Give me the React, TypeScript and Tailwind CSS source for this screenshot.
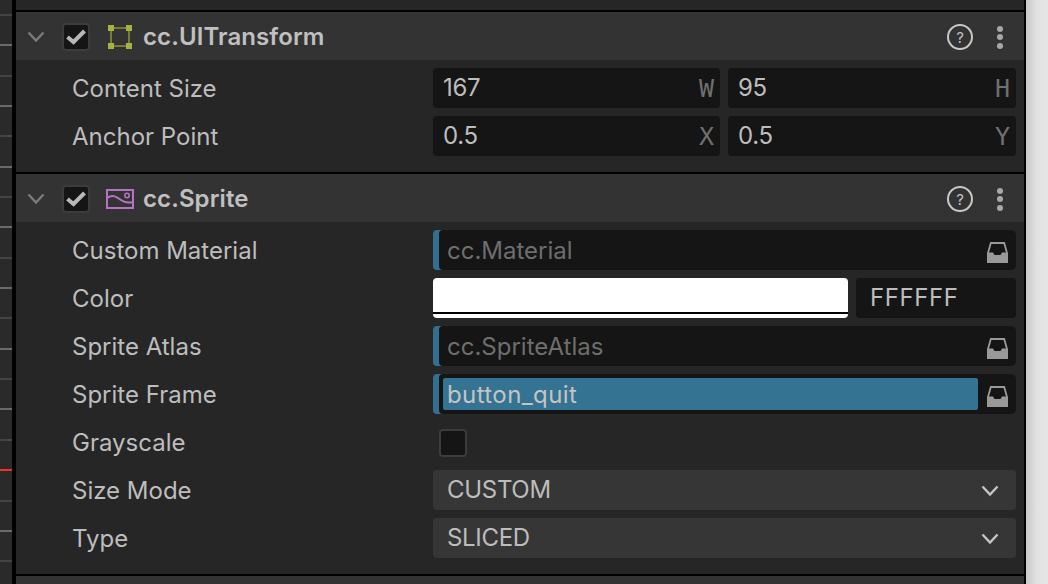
import React from "react"

const DIM = "border-[#444444]"
const BRIGHT = "border-[#6a6a6a]"

const ticks = [
  BRIGHT, DIM, BRIGHT, DIM, BRIGHT, DIM, BRIGHT, DIM, BRIGHT,
  DIM, BRIGHT, DIM, BRIGHT, DIM, "border-[#ee3322]", DIM, BRIGHT, DIM
]

const Chevron = ({ className }: { className: string }) => (
  <svg width="18" height="12" viewBox="0 0 18 12" fill="none" className={`shrink-0 ${className}`}>
    <path d="M1.5 1.5 L9 9.5 L16.5 1.5" stroke="currentColor" strokeWidth="2.4" />
  </svg>
)

const Check = ({ checked = true }: { checked?: boolean }) => (
  <div className="w-[28px] h-[28px] translate-y-[1px] rounded-[4px] bg-[#151515] border-2 border-[#3c3c3c] flex items-center justify-center shrink-0">
    {checked && (
      <svg width="20" height="16" viewBox="0 0 20 16" fill="none">
        <path d="M1.5 8 L7.5 13 L18.5 2" stroke="#b8b8b8" strokeWidth="4" />
      </svg>
    )}
  </div>
)

const TransformIcon = () => (
  <svg width="24" height="24" viewBox="0 0 24 24" className="shrink-0 translate-y-[1px]">
    <rect x="3" y="3" width="18" height="18" fill="none" stroke="#737b35" strokeWidth="2" />
    <rect x="0" y="0" width="6" height="6" fill="#a8b23e" />
    <rect x="18" y="0" width="6" height="6" fill="#a8b23e" />
    <rect x="0" y="18" width="6" height="6" fill="#a8b23e" />
    <rect x="18" y="18" width="6" height="6" fill="#a8b23e" />
  </svg>
)

const SpriteIcon = () => (
  <svg width="28" height="20" viewBox="0 0 28 20" fill="none" className="shrink-0 translate-y-[1px]">
    <rect x="1" y="1" width="26" height="18" stroke="#b573c4" strokeWidth="2" />
    <path d="M1 9 C7 5 11 8 15 11 C19 14 23 14 27 13" stroke="#b573c4" strokeWidth="2" />
    <circle cx="21" cy="6.5" r="2.2" stroke="#b573c4" strokeWidth="1.6" />
  </svg>
)

const TrayIcon = () => (
  <svg width="21" height="21" viewBox="0 0 21 21" className="shrink-0 translate-y-[2px]">
    <path d="M1 11 L3.8 1 H17.2 L20 11" fill="none" stroke="#999999" strokeWidth="1.8" />
    <path d="M0 10.5 H6 L7.5 13 H13.5 L15 10.5 H21 V21 H0 Z" fill="#999999" />
  </svg>
)

const Header = ({ title, icon }: { title: string; icon: React.ReactNode }) => (
  <div className="h-[48px] bg-[#333333] flex items-center pl-[11px] pr-[11px]">
    <Chevron className="text-[#7c7c7c] translate-y-[1px]" />
    <div className="ml-[17px]">
      <Check />
    </div>
    <div className="w-[30px] flex justify-center ml-[15px]">{icon}</div>
    <span className="ml-[8px] text-[24px] tracking-[0.1px] font-semibold text-[#c0c0c0] translate-y-[1px]">{title}</span>
    <div className="ml-auto flex items-center gap-[14px] translate-y-[1px]">
      <div className="w-[26px] h-[26px] rounded-full border-2 border-[#c8c8c8] flex items-center justify-center text-[#c0c0c0] text-[15px] leading-none">
        ?
      </div>
      <div className="w-[26px] flex flex-col items-center gap-[2.5px]">
        <span className="w-[6px] h-[6px] rounded-full bg-[#a8a8a8]" />
        <span className="w-[6px] h-[6px] rounded-full bg-[#a8a8a8]" />
        <span className="w-[6px] h-[6px] rounded-full bg-[#a8a8a8]" />
      </div>
    </div>
  </div>
)

const Row = ({ label, children }: { label: string; children: React.ReactNode }) => (
  <div className="h-[40px] flex items-center">
    <span className="w-[417px] pl-[56px] text-[24px] text-[#bdbdbd] shrink-0 translate-y-[1px]">{label}</span>
    <div className="flex-1 flex items-center gap-[8px] h-full">{children}</div>
  </div>
)

const NumInput = ({ value, unit, first }: { value: string; unit: string; first?: boolean }) => (
  <div className={`${first ? "w-[287px] shrink-0" : "flex-1"} h-full rounded-[4px] bg-[#151515] flex items-center justify-between pl-[10px] pr-[6px]`}>
    <span className="text-[24px] tracking-[-0.3px] text-[#bdbdbd]">{value}</span>
    <span className="text-[25px] text-[#707070] translate-y-[1px] font-['DejaVu_Sans_Mono',monospace]">{unit}</span>
  </div>
)

const AssetInput = ({ value, selected }: { value: string; selected?: boolean }) => (
  <div className="flex-1 h-full rounded-[4px] bg-[#33708f] pl-[6px]">
    <div className="h-full rounded-[4px] bg-[#151515] flex items-center pr-[8px]">
      {selected ? (
        <div className="ml-[4px] w-[535px] h-[32px] bg-[#357392] rounded-[2px] flex items-center">
          <span className="ml-[4px] text-[24px] tracking-[0.4px] text-[#c4c4c4] translate-y-[1px]">{value}</span>
        </div>
      ) : (
        <span className="ml-[8px] text-[24px] text-[#6e6e6e] translate-y-[1px]">{value}</span>
      )}
      <div className="ml-auto">
        <TrayIcon />
      </div>
    </div>
  </div>
)

const Select = ({ value }: { value: string }) => (
  <div className="flex-1 h-full rounded-[4px] bg-[#363636] flex items-center justify-between pl-[14px] pr-[17px]">
    <span className="text-[24px] tracking-[-0.3px] text-[#bdbdbd]">{value}</span>
    <Chevron className="text-[#c4c4c4] translate-y-[1px]" />
  </div>
)

export default function App() {
  return (
    <div className="w-[1048px] h-[584px] overflow-hidden flex bg-[#e4e4e4] font-['Inter',sans-serif]">
      {/* timeline strip */}
      <div className="w-[12px] h-full bg-[#2a2a2a] shrink-0 flex flex-col">
        <div className={`h-[16px] shrink-0 border-b-2 ${DIM}`} />
        {ticks.map((c, i) => (
          <div key={i} className={`h-[30.35px] shrink-0 border-b-2 ${c}`} />
        ))}
      </div>
      <div className="w-[4px] h-full bg-black shrink-0" />

      <div className="w-[1010px] h-full bg-[#262626] border-r-2 border-black shrink-0 flex flex-col">
        <div className="h-[10px] shrink-0" />
        <div className="h-[2px] bg-black shrink-0" />

        <Header title="cc.UITransform" icon={<TransformIcon />} />
        <div className="flex flex-col gap-[8px] pt-[8px] pb-[16px] pr-[8px]">
          <Row label="Content Size">
            <NumInput value="167" unit="W" first />
            <NumInput value="95" unit="H" />
          </Row>
          <Row label="Anchor Point">
            <NumInput value="0.5" unit="X" first />
            <NumInput value="0.5" unit="Y" />
          </Row>
        </div>
        <div className="h-[2px] bg-black shrink-0" />

        <Header title="cc.Sprite" icon={<SpriteIcon />} />
        <div className="flex flex-col gap-[8px] pt-[8px] pb-[16px] pr-[8px]">
          <Row label="Custom Material">
            <AssetInput value="cc.Material" />
          </Row>
          <Row label="Color">
            <div className="w-[415px] h-full rounded-[4px] bg-white flex flex-col justify-end pb-[4px] shrink-0">
              <div className="h-[2px] bg-black" />
            </div>
            <div className="flex-1 h-full rounded-[4px] bg-[#151515] flex items-center pl-[14px]">
              <span className="text-[24px] tracking-[0.6px] text-[#bdbdbd]">FFFFFF</span>
            </div>
          </Row>
          <Row label="Sprite Atlas">
            <AssetInput value="cc.SpriteAtlas" />
          </Row>
          <Row label="Sprite Frame">
            <AssetInput value="button_quit" selected />
          </Row>
          <Row label="Grayscale">
            <div className="ml-[6px]">
              <Check checked={false} />
            </div>
          </Row>
          <Row label="Size Mode">
            <Select value="CUSTOM" />
          </Row>
          <Row label="Type">
            <Select value="SLICED" />
          </Row>
        </div>
        <div className="h-[2px] bg-black shrink-0" />
        <div className="flex-1 bg-[#333333]" />
      </div>

      <div className="flex-1 h-full bg-gradient-to-r from-[#c8c8c8] via-[#e2e2e2] to-[#e6e6e6]" />
    </div>
  )
}
